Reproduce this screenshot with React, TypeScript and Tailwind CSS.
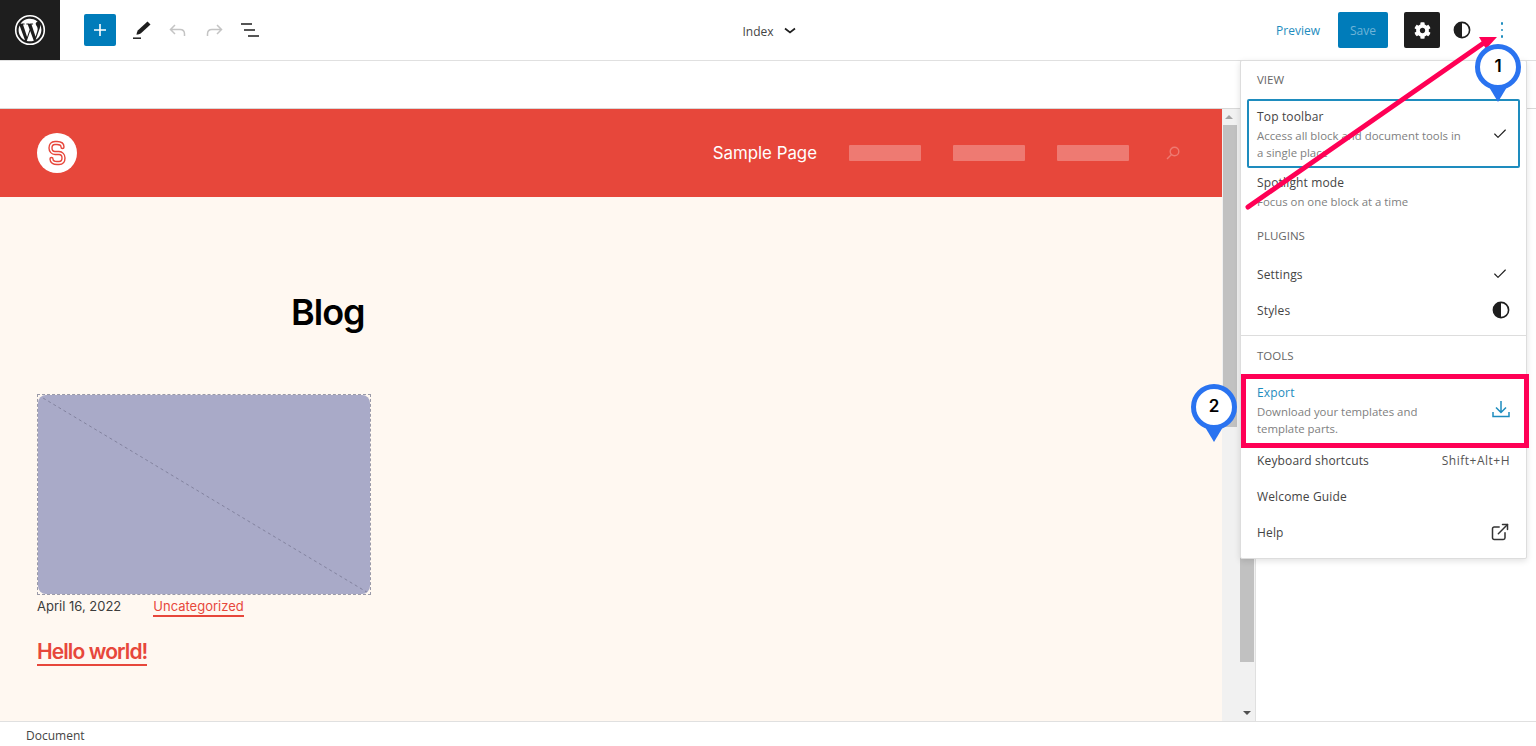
import { Check, ExternalLink } from "lucide-react";
import { FaCog } from "react-icons/fa";

const ui = "font-['Open_Sans',sans-serif]";

function ContrastIcon({ size = 18 }: { size?: number }) {
  return (
    <svg width={size} height={size} viewBox="0 0 18 18">
      <circle cx="9" cy="9" r="7.6" fill="none" stroke="#1e1e1e" strokeWidth="1.6" />
      <path d="M9 1.4a7.6 7.6 0 0 0 0 15.2z" fill="#1e1e1e" />
    </svg>
  );
}

function TopBar() {
  return (
    <header className="flex h-[61px] items-center border-b border-[#e0e0e0] bg-white">
      <div className="flex h-[60px] w-[60px] items-center justify-center bg-[#1e1e1e]">
        <svg width="32" height="32" viewBox="0 0 32 32">
          <circle cx="16" cy="16" r="14.3" fill="none" stroke="white" strokeWidth="1.6" />
          <path
            fill="white"
            d="M4.6 16c0 4.5 2.6 8.4 6.4 10.3L5.6 11.4A11.3 11.3 0 0 0 4.6 16zm19.1-.6c0-1.4-.5-2.4-.9-3.1-.6-.9-1.1-1.7-1.1-2.6 0-1 .8-2 1.9-2h.1A11.4 11.4 0 0 0 6.500 9.700h.7c1.200 0 3-.1 3-.1.6 0 .7.800.1.900 0 0-.6.100-1.300.1l4.100 12.300 2.500-7.500-1.800-4.800c-.6 0-1.200-.1-1.200-.1-.6 0-.5-.900.1-.900 0 0 1.900.1 3 .1 1.200 0 3-.1 3-.1.600 0 .7.800.1.900 0 0-.6.100-1.300.1l4.100 12.200 1.100-3.800c.5-1.500.9-2.600.9-3.600zM16.200 17l-3.400 9.900a11.400 11.400 0 0 0 7-.2l-.1-.1zm9.800-6.500.1 1.200c0 1.200-.2 2.500-.9 4.100l-3.500 10A11.400 11.400 0 0 0 26 10.500z"
          />
        </svg>
      </div>
      <div className="ml-6 flex items-center">
        <div className="flex h-8 w-8 items-center justify-center rounded-[2px] bg-[#007cba]">
          <svg width="14" height="14" viewBox="0 0 14 14">
            <path d="M7 1v12M1 7h12" stroke="white" strokeWidth="1.6" />
          </svg>
        </div>
        <svg className="ml-[16px]" width="20" height="22" viewBox="0 0 20 22">
          <path d="M15.500 2.500l3 3L9 14.200c-1 .8-3 1.300-4.500 1.500.2-1.700.7-3.500 1.500-4.500z" fill="#1e1e1e" />
          <path d="M1 19.200h8" stroke="#1e1e1e" strokeWidth="1.500" />
        </svg>
        <svg className="ml-[16px]" width="20" height="16" viewBox="0 0 20 16">
          <path d="M7 3L2.500 7.500 7 12M3 7.500h9c2.500 0 4.500 1.700 4.500 4.500v2" fill="none" stroke="#c4c4c4" strokeWidth="1.500" />
        </svg>
        <svg className="ml-[16px]" width="20" height="16" viewBox="0 0 20 16">
          <path d="M13 3l4.500 4.500L13 12M17 7.500H8C5.500 7.500 3.500 9.200 3.500 12v2" fill="none" stroke="#c4c4c4" strokeWidth="1.500" />
        </svg>
        <svg className="ml-[16px]" width="20" height="16" viewBox="0 0 20 16">
          <path d="M1 2h11M4 8h11M8 14h11" stroke="#1e1e1e" strokeWidth="1.700" />
        </svg>
      </div>
      <div className="flex flex-1 items-center justify-center pl-[2px]">
        <span className={`${ui} pt-[3px] text-[12px] text-[#444]`}>Index</span>
        <svg className="mt-[1px] ml-[10px]" width="12" height="8" viewBox="0 0 12 8">
          <path d="M1 1.500l5 4 5-4" fill="none" stroke="#1e1e1e" strokeWidth="1.700" />
        </svg>
      </div>
      <div className="flex items-center">
        <span className={`${ui} pt-[2px] text-[12px] text-[#1e8cbe]`}>Preview</span>
        <div className={`${ui} ml-[18px] flex h-9 w-[50px] items-center justify-center rounded-[2px] bg-[#007cba] pt-[2px] text-[12px] text-[#6fb4d8]`}>
          Save
        </div>
        <div className="ml-4 flex h-9 w-9 items-center justify-center rounded-[2px] bg-[#1e1e1e]">
          <FaCog size={17} color="white" />
        </div>
        <div className="ml-[13px]">
          <ContrastIcon />
        </div>
        <div className="mr-[32px] ml-[29px] flex w-[4px] flex-col items-center gap-[4px]">
          <span className="h-[2.5px] w-[2.5px] rounded-full bg-[#1e8cbe]" />
          <span className="h-[2.5px] w-[2.5px] rounded-full bg-[#1e8cbe]" />
          <span className="h-[2.5px] w-[2.5px] rounded-full bg-[#1e8cbe]" />
        </div>
      </div>
    </header>
  );
}

function SiteHeader() {
  const logoPath = "M15.500 7C15.500 4 13 3 10 3H8C5 3 3.500 5 3.500 8C3.500 11 5.500 13 8 13H12C14.500 13 16.500 15 16.500 18C16.500 21 15 23 12 23H10C7 23 4.500 22 4.500 19";
  return (
    <div className="flex h-[88px] items-center bg-[#e7473b] pr-[41px] pl-[37px] font-['Inter',sans-serif]">
      <div className="flex h-10 w-10 items-center justify-center rounded-full bg-white">
        <svg width="20" height="26" viewBox="0 0 20 26">
          <path d={logoPath} fill="none" stroke="#e7473b" strokeWidth="4.400" strokeLinecap="round" />
          <path d={logoPath} fill="none" stroke="white" strokeWidth="1.600" strokeLinecap="round" />
        </svg>
      </div>
      <div className="ml-auto flex items-center">
        <span className="pt-[1px] text-[16.85px] text-white">Sample Page</span>
        <span className="ml-8 h-4 w-[72px] rounded-[1px] bg-[#ee7a72]" />
        <span className="ml-8 h-4 w-[72px] rounded-[1px] bg-[#ee7a72]" />
        <span className="ml-8 h-4 w-[72px] rounded-[1px] bg-[#ee7a72]" />
        <svg className="ml-9" width="16" height="16" viewBox="0 0 16 16">
          <circle cx="9.500" cy="6.500" r="4.300" fill="none" stroke="#ee7a72" strokeWidth="1.400" />
          <path d="M6.500 9.500L2 14" stroke="#ee7a72" strokeWidth="1.400" />
        </svg>
      </div>
    </div>
  );
}

function Canvas() {
  return (
    <div className="min-h-0 flex-1 bg-[#fff8f1] pl-[37px] font-['Inter',sans-serif]">
      <div className="w-[334px]">
        <h1 className="mt-[93px] pl-[254px] text-[36px] leading-[44px] font-semibold tracking-[-1px] whitespace-nowrap text-black">
          Blog
        </h1>
        <div className="mt-[60px] h-[201px] border border-dashed border-[#9a9aa8]">
          <div className="h-full overflow-hidden rounded-[8px] bg-[#a9aac8]">
            <svg className="h-full w-full" viewBox="0 0 334 201" preserveAspectRatio="none">
              <path d="M0 0L334 201" stroke="#82829e" strokeWidth="1" strokeDasharray="3 3" />
            </svg>
          </div>
        </div>
        <div className="flex h-[24px] items-center text-[13px] text-[#3c3c3c]">
          <span>April 16, 2022</span>
          <span className="ml-8 border-b-2 border-[#e7473b] leading-[17px] text-[#e7473b]">Uncategorized</span>
        </div>
        <div className="mt-[19px]">
          <span className="border-b-2 border-[#e7473b] text-[21px] leading-[27px] font-semibold tracking-[-0.9px] text-[#e7473b]">
            Hello world!
          </span>
        </div>
      </div>
    </div>
  );
}

function Scrollbar({ thumbHeight, arrow, width }: { thumbHeight: number; arrow: "up" | "down"; width: string }) {
  return (
    <div className={`relative bg-[#f1f1f1] ${width}`}>
      <div className="absolute top-[16px] left-[1px] w-[14px] bg-[#c1c1c1]" style={{ height: thumbHeight }} />
      {arrow === "up" ? (
        <div className="absolute top-[6px] left-[3px] h-0 w-0 border-x-[4px] border-b-[4px] border-x-transparent border-b-[#a3a3a3]" />
      ) : (
        <div className="absolute bottom-[6px] left-[4px] h-0 w-0 border-x-[4px] border-t-[4px] border-x-transparent border-t-[#505050]" />
      )}
    </div>
  );
}

function Row({ title, desc, right, titleClass = "text-[#444]" }: { title: string; desc?: string; right?: React.ReactNode; titleClass?: string }) {
  return (
    <div className="flex min-h-9 items-center justify-between px-4">
      <div className="pt-[3px] pb-[1px]">
        <div className={`text-[12px] leading-[18px] tracking-[0.15px] ${titleClass}`}>{title}</div>
        {desc && <div className="mt-[1px] mb-[1px] w-[207px] text-[11.4px] leading-[17px] text-[#808080]">{desc}</div>}
      </div>
      {right}
    </div>
  );
}

function MenuLabel({ children }: { children: string }) {
  return <div className="px-4 text-[11.5px] leading-4 font-medium text-[#666] uppercase">{children}</div>;
}

function Menu() {
  const check = <Check className="mr-[2px]" size={16} color="#1e1e1e" strokeWidth={1.7} />;
  return (
    <div className={`${ui} absolute top-[60px] left-[1240px] h-[499px] w-[287px] rounded-[2px] border border-[#ddd] bg-white shadow-[0_2px_6px_rgba(0,0,0,0.12)]`}>
      <div className="pt-[11px]">
        <MenuLabel>View</MenuLabel>
        <div className="mx-[6px] mt-[11px] rounded-[2px] border-2 border-[#1e8cbe] px-[8px] pt-[7px] pb-[5px]">
          <div className="flex items-center justify-between pr-[2px]">
            <div>
              <div className="text-[12px] leading-[18px] tracking-[0.15px] text-[#444]">Top toolbar</div>
              <div className="mt-[1px] w-[207px] text-[11.4px] leading-[17px] text-[#808080]">Access all block and document tools in a single place</div>
            </div>
            <Check className="mb-[2px]" size={16} color="#1e1e1e" strokeWidth={1.7} />
          </div>
        </div>
        <div className="mt-[3px]">
          <Row title="Spotlight mode" desc="Focus on one block at a time" />
        </div>
        <div className="mt-[16px]">
          <MenuLabel>Plugins</MenuLabel>
        </div>
        <div className="mt-[12px]">
          <Row title="Settings" right={check} />
          <Row title="Styles" right={<ContrastIcon />} />
        </div>
      </div>
      <div className="mt-[7px] border-t border-[#ddd] pt-[12px]">
        <MenuLabel>Tools</MenuLabel>
        <div className="mt-[17px]">
          <Row
            title="Export"
            titleClass="text-[#1e8cbe]"
            desc="Download your templates and template parts."
            right={
              <svg width="18" height="18" viewBox="0 0 18 18" className="mb-[3px]">
                <path d="M9 1v11.500M4 7.500l5 5 5-5M1 12v4.500h16V12" fill="none" stroke="#1e8cbe" strokeWidth="1.500" />
              </svg>
            }
          />
        </div>
        <div className="mt-[3px]">
          <Row title="Keyboard shortcuts" right={<span className="pt-[2px] text-[12px] tracking-[0.5px] text-[#555]">Shift+Alt+H</span>} />
          <Row title="Welcome Guide" />
          <Row title="Help" right={<ExternalLink size={20} color="#333" strokeWidth={1.8} />} />
        </div>
      </div>
    </div>
  );
}

function Pin({ n, className }: { n: string; className: string }) {
  return (
    <div className={`absolute font-['Inter',sans-serif] ${className}`}>
      <div className="relative z-10 flex h-[46px] w-[46px] items-center justify-center rounded-full border-[5px] border-[#2a73f0] bg-white text-[17px] font-semibold text-black">
        {n}
      </div>
      <div className="mx-auto -mt-[3px] h-0 w-0 border-x-[9px] border-t-[15px] border-x-transparent border-t-[#2a73f0]" />
    </div>
  );
}

export default function App() {
  return (
    <div className="relative flex h-[746px] w-[1536px] flex-col overflow-hidden bg-white">
      <TopBar />
      <div className="h-[48px] border-b border-[#d8d8d8] bg-white" />
      <div className="flex min-h-0 flex-1">
        <div className="flex w-[1222px] flex-col">
          <SiteHeader />
          <Canvas />
        </div>
        <Scrollbar thumbHeight={302} arrow="up" width="w-[17px]" />
        <Scrollbar thumbHeight={537} arrow="down" width="w-[16px]" />
        <div className="flex-1 border-l border-[#e0e0e0] bg-white" />
      </div>
      <footer className={`${ui} flex h-[25px] items-center border-t border-[#e0e0e0] bg-white pt-[3px] pl-[26px] text-[12px] text-[#444]`}>
        Document
      </footer>
      <Menu />
      <div className="pointer-events-none absolute top-[374px] left-[1241px] h-[74px] w-[288px] border-[5px] border-[#ff0055]" />
      <svg className="pointer-events-none absolute top-0 left-0" width="1536" height="746" viewBox="0 0 1536 746">
        <path d="M1248 207L1488 40" stroke="#ff0055" strokeWidth="5" strokeLinecap="round" />
        <path d="M1497 37L1479 37L1486 49z" fill="#ff0055" />
      </svg>
      <Pin n="1" className="top-[44px] left-[1475px]" />
      <Pin n="2" className="top-[384px] left-[1191px]" />
    </div>
  );
}
